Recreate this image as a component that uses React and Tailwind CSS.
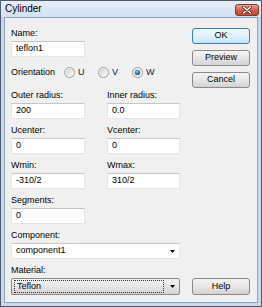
import React from 'react';

const font = { fontFamily: '"Liberation Sans", Arial, sans-serif' };

const Label = ({ children, className = '' }) => (
  <div className={`h-[11px] text-[9px] leading-[11px] text-black whitespace-nowrap ${className}`}>{children}</div>
);

const TextBox = ({ value, className = '' }) => (
  <div className={`h-[16px] bg-white border border-[#e2e5ea] border-t-[#c3c6cc] flex items-center pl-[4px] text-[9px] text-black ${className}`}>
    {value}
  </div>
);

const Arrow = () => (
  <svg width="5" height="3" viewBox="0 0 5 3" className="shrink-0">
    <path d="M0 0 H5 L2.5 3 Z" fill="#000" />
  </svg>
);

const Field = ({ label, value, className = '' }) => (
  <div className={`flex flex-col ${className}`}>
    <Label className="mb-[2px]">{label}</Label>
    <TextBox value={value} />
  </div>
);

const Radio = ({ label, checked }) => (
  <div className="w-[34px] flex items-center gap-[3px]">
    <svg width="11" height="11" viewBox="0 0 11 11">
      <defs>
        <linearGradient id={`rg${label}`} x1="0" y1="0" x2="1" y2="1">
          <stop offset="0" stopColor="#cfcfcf" />
          <stop offset="1" stopColor="#fbfbfb" />
        </linearGradient>
        <radialGradient id={`rd${label}`} cx="0.4" cy="0.35" r="0.7">
          <stop offset="0" stopColor="#8ad0f7" />
          <stop offset="0.6" stopColor="#1d74c4" />
          <stop offset="1" stopColor="#0c4f91" />
        </radialGradient>
      </defs>
      <circle cx="5.5" cy="5.5" r="5" fill="#f4f4f4" stroke="#9a9a9a" strokeWidth="1" />
      <circle cx="5.5" cy="5.5" r="3.5" fill={`url(#rg${label})`} />
      {checked && <circle cx="5.5" cy="5.5" r="2.6" fill={`url(#rd${label})`} />}
    </svg>
    <span className="text-[9px] leading-[11px] text-[#10104a]">{label}</span>
  </div>
);

const Button = ({ children, primary, className = '' }) => (
  <div
    className={`h-[16px] w-[58px] rounded-[3px] border flex items-center justify-center text-[9px] text-black ${
      primary
        ? 'border-[#3c7fb1] bg-gradient-to-b from-[#f1f9fe] via-[#dff1fc] to-[#c7e6f9]'
        : 'border-[#8a8a8a] bg-gradient-to-b from-[#f4f4f4] via-[#e6e6e6] to-[#d3d3d3]'
    } ${className}`}
  >
    {children}
  </div>
);

const CloseButton = () => (
  <div className="mt-[3px] mr-[2px] w-[24px] h-[12px] rounded-[3px] border border-[#7b3a2c] bg-gradient-to-b from-[#e9a996] via-[#d0604a] to-[#c8452f] flex items-center justify-center">
    <svg width="10" height="8" viewBox="0 0 10 8">
      <path d="M1.5 1 L8.5 7 M8.5 1 L1.5 7" stroke="#5a2318" strokeWidth="3" strokeLinecap="round" />
      <path d="M1.5 1 L8.5 7 M8.5 1 L1.5 7" stroke="#ffffff" strokeWidth="1.6" strokeLinecap="round" />
    </svg>
  </div>
);

export default function App() {
  return (
    <div style={font} className="w-[262px] h-[307px] border border-[#4b5b70] bg-[#c6d9ee] flex flex-col select-none">
      {/* title bar */}
      <div className="h-[16px] shrink-0 flex justify-between items-start bg-gradient-to-b from-[#e6eef8] to-[#d2e0f0]">
        <span className="pl-[4px] text-[10px] leading-[16px] text-black">Cylinder</span>
        <CloseButton />
      </div>

      {/* client area */}
      <div className="flex-1 mx-[3px] mb-[3px] border border-[#8ea5c2] bg-[#f0f0f0] flex pl-[6px] pr-[7px] pt-[10px] pb-[7px]">
        <div className="w-[169px] flex flex-col">
          <Field label="Name:" value="teflon1" className="w-[74px]" />

          <div className="mt-[9px] h-[12px] flex items-center">
            <span className="w-[53px] text-[9px] leading-[11px]">Orientation</span>
            <Radio label="U" />
            <Radio label="V" />
            <Radio label="W" checked />
          </div>

          <div className="mt-[12px] flex justify-between">
            <Field label="Outer radius:" value="200" className="w-[74px]" />
            <Field label="Inner radius:" value="0.0" className="w-[73px]" />
          </div>
          <div className="mt-[6px] flex justify-between">
            <Field label="Ucenter:" value="0" className="w-[74px]" />
            <Field label="Vcenter:" value="0" className="w-[73px]" />
          </div>
          <div className="mt-[6px] flex justify-between">
            <Field label="Wmin:" value="-310/2" className="w-[74px]" />
            <Field label="Wmax:" value="310/2" className="w-[73px]" />
          </div>
          <Field label="Segments:" value="0" className="mt-[6px] w-[74px]" />

          <div className="mt-[6px] flex flex-col">
            <Label className="mb-[2px]">Component:</Label>
            <div className="h-[16px] bg-white border border-[#e2e5ea] border-t-[#c3c6cc] flex items-center pl-[4px] pr-[4px] text-[9px]">
              <span className="flex-1">component1</span>
              <Arrow />
            </div>
          </div>

          <div className="mt-[6px] flex flex-col">
            <Label className="mb-[2px]">Material:</Label>
            <div className="h-[17px] rounded-[2px] border border-[#8a8a8a] bg-gradient-to-b from-[#f4f4f4] via-[#e6e6e6] to-[#d3d3d3] flex items-center pl-[2px] pr-[4px] text-[9px]">
              <div className="flex-1 h-[13px] border border-dotted border-[#333] flex items-center pl-[2px] mr-[6px]">Teflon</div>
              <Arrow />
            </div>
          </div>
        </div>

        <div className="ml-[12px] w-[58px] flex flex-col">
          <Button primary>OK</Button>
          <Button className="mt-[6px]">Preview</Button>
          <Button className="mt-[6px]">Cancel</Button>
          <Button className="mt-auto h-[17px]">Help</Button>
        </div>
      </div>
    </div>
  );
}
